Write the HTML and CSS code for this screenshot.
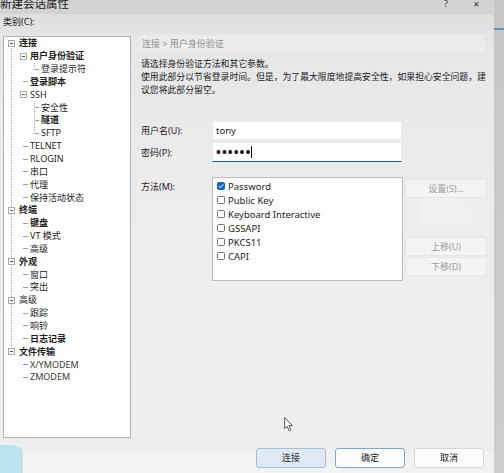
FILE: index.html
```
<!DOCTYPE html>
<html lang="zh-CN">
<head>
<meta charset="utf-8">
<title>新建会话属性</title>
<link rel="stylesheet" href="styles.css">
</head>
<body>
<div class="screen">
  <div class="dialog">
    <div class="titlebar">
      <span class="title">新建会话属性</span>
      <span class="tb-btns"><span class="tb-help">?</span><span class="tb-close">✕</span></span>
    </div>
    <div class="cat-label">类别(C):</div>
    <div class="main">
      <div class="tree">
        <div class="treelist">
          <div class="row r0"><span class="exp"></span><span class="t b">连接</span></div>
          <div class="row r1x"><span class="exp"></span><span class="t b">用户身份验证</span></div>
          <div class="kids1">
            <div class="row r2"><span class="dash d2"></span><span class="t">登录提示符</span></div>
          </div>
          <div class="row r1"><span class="dash"></span><span class="t b">登录脚本</span></div>
          <div class="row r1x"><span class="exp"></span><span class="t">SSH</span></div>
          <div class="kids1">
            <div class="row r2"><span class="dash d2"></span><span class="t">安全性</span></div>
            <div class="row r2"><span class="dash d2"></span><span class="t b">隧道</span></div>
            <div class="row r2"><span class="dash d2"></span><span class="t">SFTP</span></div>
          </div>
          <div class="row r1"><span class="dash"></span><span class="t">TELNET</span></div>
          <div class="row r1"><span class="dash"></span><span class="t">RLOGIN</span></div>
          <div class="row r1"><span class="dash"></span><span class="t">串口</span></div>
          <div class="row r1"><span class="dash"></span><span class="t">代理</span></div>
          <div class="row r1"><span class="dash"></span><span class="t">保持活动状态</span></div>
          <div class="row r0"><span class="exp"></span><span class="t b">终端</span></div>
          <div class="row r1"><span class="dash"></span><span class="t b">键盘</span></div>
          <div class="row r1"><span class="dash"></span><span class="t">VT 模式</span></div>
          <div class="row r1"><span class="dash"></span><span class="t">高级</span></div>
          <div class="row r0"><span class="exp"></span><span class="t b">外观</span></div>
          <div class="row r1"><span class="dash"></span><span class="t">窗口</span></div>
          <div class="row r1"><span class="dash"></span><span class="t">突出</span></div>
          <div class="row r0"><span class="exp"></span><span class="t">高级</span></div>
          <div class="row r1"><span class="dash"></span><span class="t">跟踪</span></div>
          <div class="row r1"><span class="dash"></span><span class="t">响铃</span></div>
          <div class="row r1"><span class="dash"></span><span class="t b">日志记录</span></div>
          <div class="row r0"><span class="exp"></span><span class="t b">文件传输</span></div>
          <div class="row r1"><span class="dash"></span><span class="t dim">X/YMODEM</span></div>
          <div class="row r1"><span class="dash"></span><span class="t dim">ZMODEM</span></div>
        </div>
      </div>
      <div class="pane">
        <div class="crumb">连接 &gt; 用户身份验证</div>
        <div class="desc">请选择身份验证方法和其它参数。</div>
        <div class="desc">使用此部分以节省登录时间。但是，为了最大限度地提高安全性，如果担心安全问题，建<br>议您将此部分留空。</div>
        <div class="form">
          <div class="flabel">用户名(U):</div>
          <div class="input user">tony</div>
          <div class="flabel">密码(P):</div>
          <div class="input pass"><span class="dots">••••••</span><span class="caret"></span></div>
        </div>
        <div class="method">
          <div class="flabel mlabel">方法(M):</div>
          <div class="listbox">
            <div class="opt"><span class="cb on"><svg viewBox="0 0 8 8" width="8" height="8"><path d="M1.8 4.2 L3.3 5.6 L6.3 2.4" fill="none" stroke="#fff" stroke-width="1"/></svg></span>Password</div>
            <div class="opt"><span class="cb"></span>Public Key</div>
            <div class="opt"><span class="cb"></span>Keyboard Interactive</div>
            <div class="opt"><span class="cb"></span>GSSAPI</div>
            <div class="opt"><span class="cb"></span>PKCS11</div>
            <div class="opt"><span class="cb"></span>CAPI</div>
          </div>
          <div class="sidebtns">
            <div class="sbtn">设置(S)...</div>
            <div class="ghost"></div>
            <div class="sbtn up">上移(U)</div>
            <div class="sbtn down">下移(D)</div>
          </div>
        </div>
      </div>
    </div>
    <div class="footer">
      <div class="btn connect">连接</div>
      <div class="btn ok">确定</div>
      <div class="btn cancel">取消</div>
    </div>
  </div>
  <div class="strip"><div class="strip-line"></div></div>
  <div class="blob"></div>
  <svg class="pointer" viewBox="0 0 10 15" width="10" height="15"><path d="M0.6 0.6 L0.6 11.6 L3.1 9.2 L5 13.6 L6.8 12.8 L4.9 8.5 L8.4 8.5 Z" fill="#fff" stroke="#333" stroke-width="0.8" stroke-linejoin="round"/></svg>
</div>
</body>
</html>
```

FILE: styles.css
```
* { box-sizing: border-box; }
html, body { margin: 0; padding: 0; }
body {
  width: 504px;
  height: 473px;
  overflow: hidden;
  font-family: "Noto Sans", "Noto Sans CJK SC", sans-serif;
  font-size: 9px;
  color: #1c1c1c;
  background: #c9c9c9;
}
.screen {
  position: relative;
  width: 504px;
  height: 473px;
  display: flex;
}
.dialog {
  width: 494px;
  height: 473px;
  display: flex;
  flex-direction: column;
  background: linear-gradient(#dedede 14px, #e6e6e6 40px, #ebeaeb 120px, #efeeef 260px, #f0eff0);
  box-shadow: 1px 0 1px rgba(0,0,0,0.08);
}
.titlebar {
  height: 14px;
  flex: none;
  background: #d3d3d3;
  display: flex;
  justify-content: space-between;
  overflow: hidden;
}
.title {
  font-size: 11.5px;
  line-height: 11px;
  margin-top: -2px;
  color: #222;
}
.tb-btns {
  display: flex;
  gap: 25px;
  margin-right: 14px;
  font-size: 9px;
  line-height: 9px;
  color: #333;
}
.tb-help { margin-top: -1px; }
.tb-close { margin-top: -1px; font-size: 8px; }

.cat-label {
  height: 21px;
  flex: none;
  padding-left: 3px;
  line-height: 16px;
}
.main {
  height: 403px;
  flex: none;
  display: grid;
  grid-template-columns: 128px 357px;
  column-gap: 6px;
  padding-left: 3px;
}
.tree {
  margin-top: 1px;
  height: 402px;
  background: #fff;
  border: 1px solid #b3b3b3;
  overflow: hidden;
}
.treelist {
  background-image: repeating-linear-gradient(to bottom, #a8a8a8 0 1px, transparent 1px 2px);
  background-size: 1px 308px;
  background-position: 7px 7px;
  background-repeat: no-repeat;
}
.row {
  height: 12.85px;
  display: flex;
  align-items: center;
  white-space: nowrap;
  line-height: 12px;
}
.r0 { padding-left: 4px; gap: 4px; }
.r1x { padding-left: 16px; gap: 3px; }
.r1 { padding-left: 19px; gap: 2px; }
.r2 { padding-left: 0; gap: 2px; }
.kids1 {
  margin-left: 30px;
  background-image: repeating-linear-gradient(to bottom, #a8a8a8 0 1px, transparent 1px 2px);
  background-size: 1px calc(100% - 6px);
  background-repeat: no-repeat;
  background-position: 0 0;
}
.exp {
  width: 7px;
  height: 7px;
  flex: none;
  border: 1px solid #a9a9a9;
  background: #fff;
  display: flex;
  align-items: center;
  justify-content: center;
}
.exp::before {
  content: "";
  width: 3px;
  height: 1px;
  background: #555;
}
.dash {
  width: 5px;
  height: 1px;
  flex: none;
  background: #a0a0a0;
}
.dash.d2 { width: 4px; margin-left: 1px; }
.t { color: #1c1c1c; }
.t.b { font-weight: 700; }
.t.dim { color: #3a3a3a; }

.pane {
  display: flex;
  flex-direction: column;
}
.crumb {
  width: 348px;
  height: 17px;
  line-height: 17px;
  padding-left: 5px;
  background: #ececec;
  color: #8e8e8e;
}
.desc {
  padding-left: 4px;
  font-size: 8.85px;
  line-height: 13px;
  white-space: nowrap;
  color: #1c1c1c;
}
.crumb + .desc { margin-top: 6px; }
.form {
  margin-top: 24px;
  display: grid;
  grid-template-columns: 75px 190px;
  row-gap: 2px;
  align-items: center;
}
.flabel {
  padding-left: 4px;
  line-height: 13px;
}
.input {
  background: #fff;
  padding-left: 3px;
  display: flex;
  align-items: center;
}
.input.user {
  height: 19px;
  border: 1px solid #ebebeb;
  font-size: 9.5px;
}
.input.pass {
  height: 20px;
  border: 1px solid #ebebeb;
  border-bottom: 1px solid #1f5c8e;
}
.dots {
  font-size: 13px;
  font-weight: 700;
  letter-spacing: 1px;
  line-height: 12px;
  color: #111;
}
.caret {
  width: 1px;
  height: 12px;
  background: #111;
  margin-left: 0;
}
.method {
  margin-top: 15px;
  display: flex;
  align-items: flex-start;
}
.mlabel {
  width: 75px;
  padding-top: 3px;
}
.listbox {
  width: 191px;
  height: 104px;
  background: #fff;
  border: 1px solid #bdbdbd;
  padding: 1px 0 0 4px;
}
.opt {
  height: 14px;
  display: flex;
  align-items: center;
  gap: 3px;
  white-space: nowrap;
  font-size: 9.5px;
  color: #1e1e1e;
}
.cb {
  width: 8px;
  height: 8px;
  flex: none;
  border: 1px solid #737373;
  border-radius: 1.5px;
  background: #fff;
  display: flex;
}
.cb.on {
  background: #1565c0;
  border-color: #1565c0;
}
.cb svg { margin: -1px; }
.sidebtns {
  margin-left: 2px;
  width: 82px;
  display: flex;
  flex-direction: column;
  margin-top: 2px;
}
.sbtn {
  height: 19px;
  line-height: 17px;
  text-align: center;
  background: #f4f4f4;
  border: 1px solid #e6e6e6;
  color: #9c9c9c;
}
.ghost {
  height: 26px;
  margin: 0 16px;
  background: #f2f2f2;
  opacity: 0.6;
}
.sbtn.up { margin-top: 13px; }
.sbtn.down { margin-top: 1px; }

.footer {
  flex: 1;
  display: flex;
  justify-content: flex-end;
  align-items: flex-start;
  gap: 9px;
  padding: 10px 10px 0 0;
  background: linear-gradient(#efeeef 12px, #f2f1f2 14px, #f3f3f3);
}
.btn {
  width: 70px;
  height: 20px;
  line-height: 18px;
  text-align: center;
  border-radius: 3px;
  color: #222;
  background: #fcfcfc;
  border: 1px solid #d7d7d7;
}
.btn.connect {
  background: #dfeaf4;
  border-color: #a4bfd8;
}
.btn.ok {
  border-color: #7ea8d0;
}
.strip {
  flex: 1;
  background: linear-gradient(#c6c6c6, #cdcdcd);
}
.strip-line {
  margin-top: 28px;
  height: 2px;
  background: #6b8fae;
}
.blob {
  position: absolute;
  left: 0;
  top: 445px;
  width: 23px;
  height: 28px;
  background: #bde2ef;
  border-top-right-radius: 12px 8px;
}
.pointer {
  position: absolute;
  left: 284px;
  top: 417px;
}
```
